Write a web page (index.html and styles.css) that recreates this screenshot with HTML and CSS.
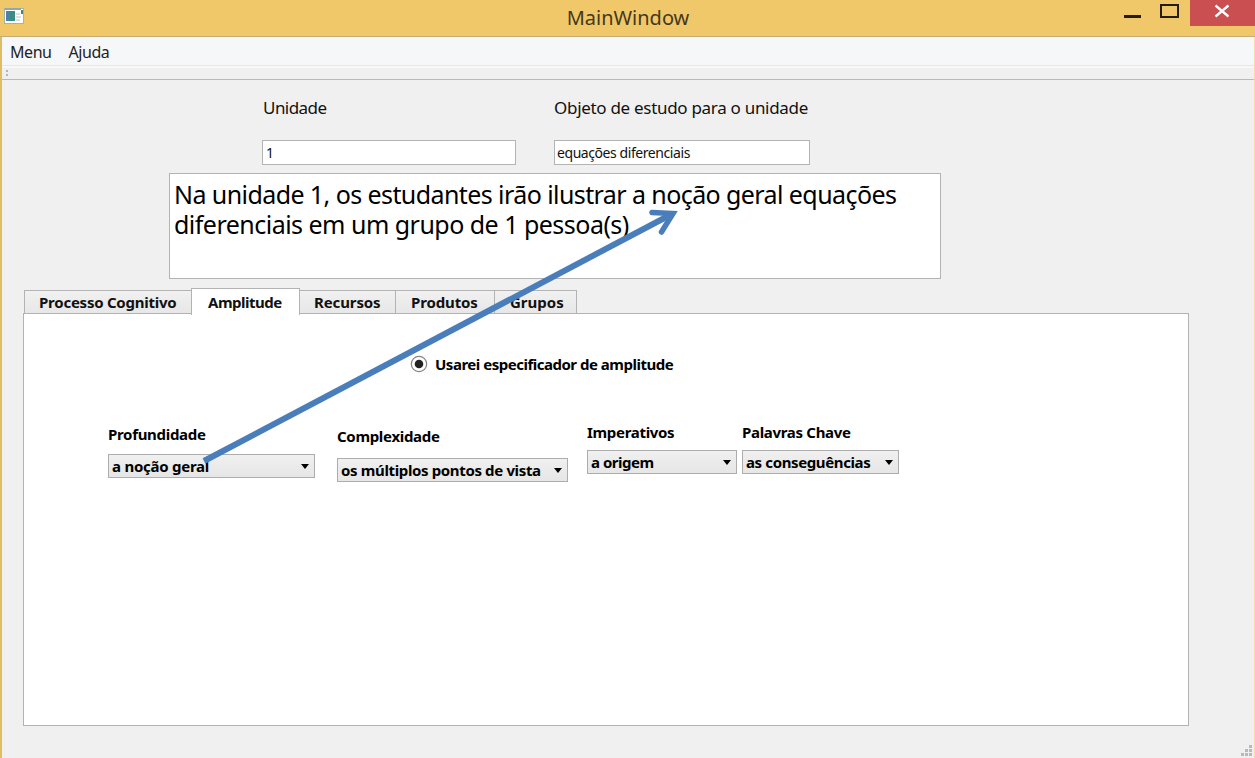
FILE: index.html
```html
<!DOCTYPE html>
<html lang="pt">
<head>
<meta charset="utf-8">
<title>MainWindow</title>
<link rel="stylesheet" href="styles.css">
</head>
<body>
<div class="window">
  <header class="titlebar">
    <svg class="app-icon" width="21" height="17" viewBox="0 0 21 17">
      <rect x="0.5" y="0.5" width="19" height="15" fill="#fff" stroke="#a9b3a4"/>
      <rect x="1" y="0" width="16" height="2" fill="#93aaa4"/>
      <rect x="2" y="3" width="9" height="10" fill="#3d8c83"/>
      <path d="M2 3h4v10h-4z" fill="#4a83a6"/>
      <path d="M12 6h4M12 9h5M12 12h4" stroke="#b9c3c3"/>
      <rect x="17" y="2" width="2" height="4" fill="#4d8275"/>
    </svg>
    <h1 class="window-title">MainWindow</h1>
    <div class="controls">
      <svg width="60" height="26" viewBox="0 0 60 26"><path d="M0 16.500h17" stroke="#251d10" stroke-width="3"/><rect x="37" y="5" width="17" height="12" fill="none" stroke="#251d10" stroke-width="2"/></svg>
      <span class="close"><svg width="65" height="26" viewBox="0 0 65 26"><path d="M25.500 5.500L38.500 16.500M38.500 5.500L25.500 16.500" stroke="#fff" stroke-width="2.300"/></svg></span>
    </div>
  </header>
  <nav class="menubar"><span>Menu</span><span>Ajuda</span></nav>
  <div class="toolbar"><i></i><i></i></div>
  <main class="content">
    <section class="fields">
      <label class="field"><span class="t-unit">Unidade</span><span class="input">1</span></label>
      <label class="field"><span class="t-object">Objeto de estudo para o unidade</span><span class="input wide">equações diferenciais</span></label>
    </section>
    <section class="summary"><div class="t-line1">Na unidade 1, os estudantes irão ilustrar a noção geral equações</div><div class="t-line2">diferenciais em um grupo de 1 pessoa(s)</div></section>
    <div class="tabs">
      <div class="tab tab-process">Processo Cognitivo</div>
      <div class="tab active">Amplitude</div>
      <div class="tab tab-res">Recursos</div>
      <div class="tab tab-prod">Produtos</div>
      <div class="tab tab-group">Grupos</div>
    </div>
    <section class="panel">
      <div class="radio-row"><svg width="18" height="18" viewBox="0 0 18 18"><circle cx="9" cy="9" r="7.700" fill="#fff" stroke="#858585" stroke-width="1.200"/><circle cx="9" cy="9" r="4.300" fill="#222"/></svg><span class="t-radio">Usarei especificador de amplitude</span></div>
      <div class="selectors">
        <div class="selector depth"><span class="t-label">Profundidade</span><div class="combo"><span class="t-cdepth">a noção geral</span><b></b></div></div>
        <div class="selector complexity"><span class="t-label">Complexidade</span><div class="combo"><span class="t-ccomplex">os múltiplos pontos de vista</span><b></b></div></div>
        <div class="selector imperative"><span class="t-label">Imperativos</span><div class="combo"><span class="t-cimp">a origem</span><b></b></div></div>
        <div class="selector keywords"><span class="t-label">Palavras Chave</span><div class="combo"><span class="t-ckey">as conseguências</span><b></b></div></div>
      </div>
    </section>
  </main>
  <svg class="grip" width="12" height="12" viewBox="0 0 12 12"><path d="M8 0h3v3h-3zM4 4h3v3h-3zM8 4h3v3h-3zM0 8h3v3h-3zM4 8h3v3h-3zM8 8h3v3h-3z" fill="#b9b9b9"/></svg>
  <svg class="arrow" width="1255" height="758" viewBox="0 0 1255 758"><path d="M204 461L672 214" stroke="#4a7ebb" stroke-width="6" fill="none"/><path d="M652 212.500L673 213.500L661.500 232" stroke="#4a7ebb" stroke-width="5.500" fill="none" stroke-linecap="round" stroke-linejoin="miter"/></svg>
</div>
</body>
</html>
```
FILE: styles.css
```css
* { box-sizing: border-box; }
body { margin: 0; overflow: hidden; font-family: "Noto Sans", sans-serif; color: #111; }
.window { position: relative; width: 1255px; height: 758px; background: #f0f0f0; border-left: 2px solid #dfbd63; border-right: 1px solid #f3dfaa; display: flex; flex-direction: column; }
span { white-space: nowrap; }
.titlebar { height: 37px; margin: 0 -1px 0 -2px; background: #f0c869; border-bottom: 1px solid #c5ae76; display: flex; justify-content: space-between; }
.app-icon { margin: 8px 0 0 4px; }
.window-title { margin: 5px 0 0 107px; font-size: 20px; line-height: 26px; font-weight: 400; color: #46381b; }
.controls { display: flex; width: 131px; justify-content: space-between; }
.close { width: 65px; height: 26px; background: #c94f50; }
.menubar { height: 29px; background: #f5f7f9; border-bottom: 1px solid #e5e8ea; padding: 4px 8px; display: flex; gap: 17px; font-size: 16px; line-height: 22px; letter-spacing: -0.45px; color: #222; }
.toolbar { height: 14px; border-top: 2px solid #f8f8f8; border-bottom: 1px solid #b8b8b8; padding: 2px 4px; display: flex; flex-direction: column; gap: 2px; }
.toolbar i { width: 2px; height: 2px; background: #b5b5b5; }
.content { flex: 1; padding: 16px 0 0 1px; }
.fields { display: flex; gap: 38px; padding-left: 259px; }
.field { display: flex; flex-direction: column; gap: 20px; width: 254px; font-size: 17px; line-height: 24px; }
.t-unit { letter-spacing: -0.55px; padding-left: 1px; }
.t-object { letter-spacing: -0.3px; }
.input { width: 254px; height: 25px; border: 1px solid #b3b3b3; background: #fff; padding-left: 3px; font-size: 14px; line-height: 24px; letter-spacing: -0.43px; }
.input.wide { width: 256px; padding-left: 2px; }
.summary { margin: 8px 0 0 166px; width: 772px; height: 106px; border: 1px solid #b3b3b3; background: #fff; padding: 5px 4px; font-size: 25px; line-height: 30px; color: #000; }
.t-line1 { letter-spacing: -0.58px; white-space: nowrap; }
.t-line2 { letter-spacing: -0.52px; white-space: nowrap; }
.tabs { display: flex; align-items: flex-end; height: 27px; margin: 8px 0 0 21px; font-size: 15px; font-weight: 700; }
.tab { height: 24px; border: 1px solid #b3b3b3; border-left-width: 0; background: linear-gradient(#f1f1f1, #e7e7e7); padding-left: 14px; line-height: 23px; letter-spacing: -0.12px; white-space: nowrap; }
.tab-process { width: 168px; border-left-width: 1px; padding-left: 14px; letter-spacing: -0.24px; }
.tab.active { width: 109px; height: 27px; margin: 0 0 -1px -1px; border-left-width: 1px; border-bottom: 0; background: #fff; padding-left: 16px; line-height: 26px; letter-spacing: -0.5px; z-index: 1; }
.tab-res { width: 96px; }
.tab-prod { width: 99px; padding-left: 15px; }
.tab-group { width: 82px; padding-left: 15px; letter-spacing: 0; }
.panel { width: 1166px; height: 413px; margin: -1px 0 0 20px; border: 1px solid #b3b3b3; background: #fff; font-size: 15px; line-height: 20px; font-weight: 700; color: #000; }
.radio-row { display: flex; align-items: center; gap: 7px; margin: 40px 0 0 386px; height: 20px; }
.t-radio { letter-spacing: -0.49px; }
.selectors { display: flex; align-items: flex-start; margin: 48px 0 0 84px; }
.selector { display: flex; flex-direction: column; }
.t-label { letter-spacing: -0.31px; }
.combo { height: 24px; margin-top: 8px; border: 1px solid #adadad; background: linear-gradient(#f0f0f0, #e6e6e6); display: flex; align-items: center; justify-content: space-between; padding: 0 5px 0 3px; }
.combo b { border: 4.500px solid transparent; border-top: 5px solid #000; border-bottom: 0; }
.depth { width: 207px; margin: 2px 22px 0 0; }
.depth .combo { margin-top: 10px; }
.complexity { width: 231px; margin: 4px 19px 0 0; }
.complexity .combo { margin-top: 12px; }
.imperative { width: 150px; margin-right: 5px; }
.keywords { width: 157px; }
.t-cdepth { letter-spacing: -0.25px; }
.t-ccomplex { letter-spacing: -0.36px; }
.t-cimp { letter-spacing: -0.5px; }
.t-ckey { letter-spacing: -0.38px; }
.grip { position: absolute; right: 1px; bottom: 1px; }
.arrow { position: absolute; left: -2px; top: 0; z-index: 2; }
```
